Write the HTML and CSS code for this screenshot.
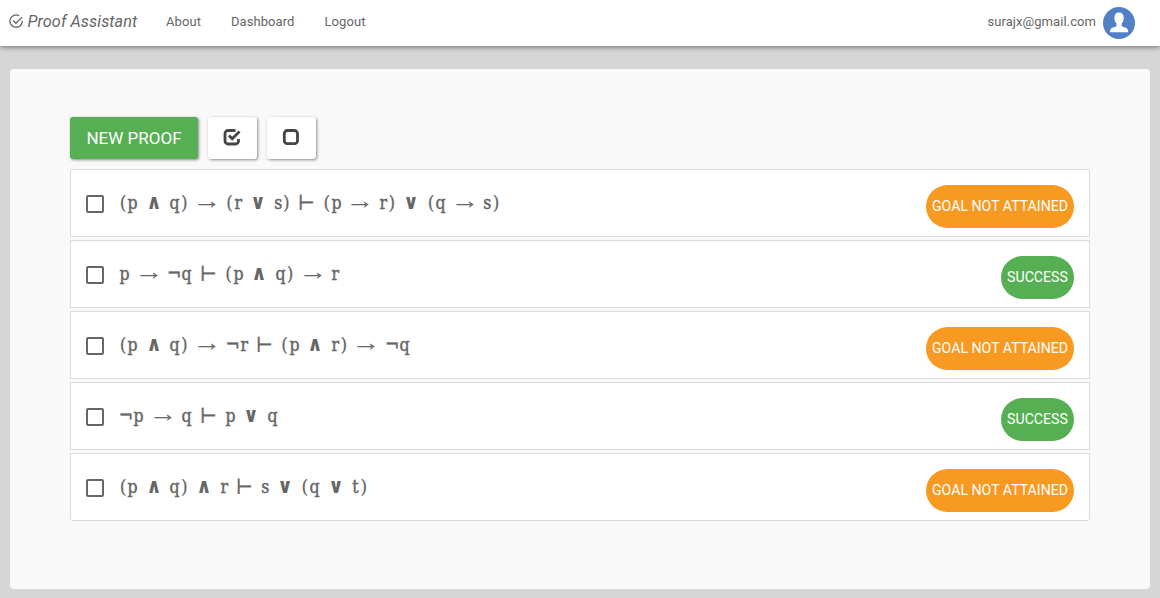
FILE: index.html
```
<!DOCTYPE html>
<html lang="en">
<head>
<meta charset="utf-8">
<title>Proof Assistant</title>
<link rel="stylesheet" href="styles.css">
</head>
<body>
<nav class="navbar">
  <a class="brand"><svg class="brand-icon" viewBox="0 0 14 14"><path d="M9.700 1.500A6 6 0 1 0 12.900 6.600M4 6.200l2.700 2.700L12.600 3"/></svg><span>Proof Assistant</span></a>
  <a class="link">About</a>
  <a class="link">Dashboard</a>
  <a class="link">Logout</a>
  <span class="user">surajx@gmail.com</span>
  <svg class="avatar" viewBox="0 0 32 32"><circle cx="16" cy="16" r="16" fill="#5180c4"/><path fill="#fff" d="M16 5.600c3 0 4.700 2 4.700 5.300 0 2.400-.8 4.100-2 5.500v2.200c0 1 1 1.300 2.700 1.700 2.500.7 3.800 1.700 3.800 4.900H7c0-3.200 1.300-4.200 3.800-4.900 1.700-.4 2.700-.7 2.700-1.700v-2.200c-1.300-1.400-2.100-3.100-2.100-5.500 0-3.300 1.600-5.300 4.600-5.300z"/></svg>
</nav>
<main class="panel">
  <div class="toolbar">
    <button class="btn btn-new">NEW PROOF</button>
    <button class="btn btn-icon"><svg viewBox="0 0 18 18"><path class="heavy" d="M12.500 2.500H5A3 3 0 0 0 2 5.500v7.500a3 3 0 0 0 3 3h7.500a3 3 0 0 0 3-3V11"/><path class="heavy" d="M6 7.500l3.200 3.200L16.500 3.500"/></svg></button>
    <button class="btn btn-icon"><svg viewBox="0 0 18 18"><rect class="heavy" x="2.300" y="2.500" width="13.200" height="13.200" rx="3"/></svg></button>
  </div>
  <div class="list">
    <div class="row"><span class="box"></span><div class="formula"><i class="b">(</i><i class="p">p</i> <i class="w">∧</i> <i class="p">q</i><i class="b">)</i> <i class="a">→</i> <i class="b">(</i><i class="r">r</i> <i class="w">∨</i> <i class="r">s</i><i class="b">)</i> <i class="t">⊢</i> <i class="b">(</i><i class="p">p</i> <i class="a">→</i> <i class="r">r</i><i class="b">)</i> <i class="w">∨</i> <i class="b">(</i><i class="p">q</i> <i class="a">→</i> <i class="r">s</i><i class="b">)</i></div><span class="badge warn">GOAL NOT ATTAINED</span></div>
    <div class="row"><span class="box"></span><div class="formula"><i class="p">p</i> <i class="a">→</i> <i class="n">¬</i><i class="p">q</i> <i class="t">⊢</i> <i class="b">(</i><i class="p">p</i> <i class="w">∧</i> <i class="p">q</i><i class="b">)</i> <i class="a">→</i> <i class="r">r</i></div><span class="badge ok">SUCCESS</span></div>
    <div class="row"><span class="box"></span><div class="formula"><i class="b">(</i><i class="p">p</i> <i class="w">∧</i> <i class="p">q</i><i class="b">)</i> <i class="a">→</i> <i class="n">¬</i><i class="r">r</i> <i class="t">⊢</i> <i class="b">(</i><i class="p">p</i> <i class="w">∧</i> <i class="r">r</i><i class="b">)</i> <i class="a">→</i> <i class="n">¬</i><i class="p">q</i></div><span class="badge warn">GOAL NOT ATTAINED</span></div>
    <div class="row"><span class="box"></span><div class="formula"><i class="n">¬</i><i class="p">p</i> <i class="a">→</i> <i class="p">q</i> <i class="t">⊢</i> <i class="p">p</i> <i class="w">∨</i> <i class="p">q</i></div><span class="badge ok">SUCCESS</span></div>
    <div class="row"><span class="box"></span><div class="formula"><i class="b">(</i><i class="p">p</i> <i class="w">∧</i> <i class="p">q</i><i class="b">)</i> <i class="w">∧</i> <i class="r">r</i> <i class="t">⊢</i> <i class="r">s</i> <i class="w">∨</i> <i class="b">(</i><i class="p">q</i> <i class="w">∨</i> <i class="r">t</i><i class="b">)</i></div><span class="badge warn">GOAL NOT ATTAINED</span></div>
  </div>
</main>
</body>
</html>
```
FILE: styles.css
```
* { box-sizing: border-box; }
body { margin: 0; height: 598px; overflow: hidden; background: #d6d6d6; font-family: Roboto, sans-serif; color: #666; }
.navbar { height: 46px; background: #fff; display: flex; align-items: center; padding: 0 25px 0 9px; font-size: 13px; letter-spacing: .07px; box-shadow: 0 1px 5px rgba(0,0,0,.5); white-space: nowrap; }
.brand { display: flex; align-items: center; gap: 4px; width: 157px; font-size: 16.250px; font-style: italic; padding-bottom: 3px; }
.brand-icon { width: 14.500px; height: 14.500px; fill: none; stroke: #666; stroke-width: 1.300; }
.link { margin-right: 30px; padding-bottom: 3px; }
.user { margin-left: auto; margin-right: 7px; padding-bottom: 3px; }
.avatar { width: 32px; height: 32px; }
.panel { margin: 23px 10px 0; height: 520px; padding: 48px 60px; background: #f9f9f9; border-radius: 4px; }
.toolbar { display: flex; gap: 10px; height: 42px; margin-bottom: 10px; }
.btn { border: 0; border-radius: 3px; padding: 0; display: flex; align-items: center; justify-content: center; font-family: Roboto, sans-serif; box-shadow: 1px 1px 3px rgba(0,0,0,.45); }
.btn-new { width: 128px; background: #56af52; color: #fff; font-size: 17px; }
.btn-icon { width: 49px; background: #fff; }
.btn-icon svg { width: 18px; height: 18px; margin: 0 1px 2px 0; }
.heavy { fill: none; stroke: #444; stroke-width: 2.800; }
.list { display: flex; flex-direction: column; gap: 3px; }
.row { height: 68px; display: flex; align-items: center; border: 1px solid #dbdbdb; background: #fff; padding: 0 15px; }
.row:first-child { border-radius: 3px 3px 0 0; }
.row:last-child { border-radius: 0 0 3px 3px; }
.box { width: 18px; height: 18px; border: 2px solid #666; border-radius: 2px; margin-right: 15px; margin-top: 2px; }
.formula { display: flex; align-items: baseline; height: 30px; margin-bottom: 2px; line-height: 30px; white-space: pre; font-family: "DejaVu Serif Condensed", "DejaVu Serif", serif; font-stretch: condensed; font-size: 19px; -webkit-text-stroke: .45px #666; }
.formula i { display: flex; justify-content: center; font-style: normal; }
.formula .b { width: 8px; -webkit-text-stroke: .2px #666; }
.formula .p { width: 11px; }
.formula .r { width: 8.700px; }
.formula .p, .formula .r { transform: scaleX(.92); }
.formula .t { width: 15px; transform: scale(1.180, 1.100); -webkit-text-stroke: .2px #666; }
.formula .n { width: 14px; }
.formula .w { width: 14px; font: bold 17px/30px "DejaVu Sans", sans-serif; transform: translateY(-1px) scale(1.120, 1.220); -webkit-text-stroke: 0; }
.formula .a { width: 19.900px; font: 20px/30px "Liberation Serif", serif; transform: translateY(-2px) scale(1.450, 1.250); -webkit-text-stroke: 0; }
.formula i + i { margin-left: 8.700px; }
.formula .b + .p, .formula .b + .r, .formula .p + .b, .formula .r + .b, .formula .n + .p, .formula .n + .r { margin-left: 0; }
.badge { margin-left: auto; margin-top: 7px; height: 43px; border-radius: 22px; padding: 0 6px 1px; display: flex; align-items: center; justify-content: center; color: #fff; font-size: 14.150px; white-space: nowrap; }
.warn { width: 148px; background: #f89a22; }
.ok { width: 73px; background: #56af52; }
```
